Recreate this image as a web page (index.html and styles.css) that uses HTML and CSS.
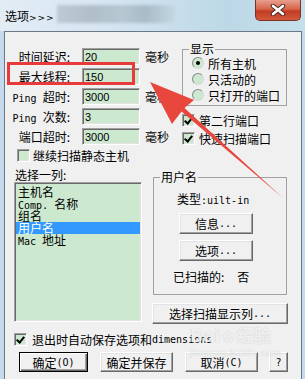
FILE: index.html
```html
<!DOCTYPE html>
<html lang="zh-CN">
<head>
<meta charset="UTF-8">
<title>选项</title>
<link rel="stylesheet" href="styles.css">
</head>
<body>
<div class="window">
    <div class="titlebar">
        <span class="title">选项<span class="arrows">&gt;&gt;&gt;</span></span>
        <span class="blur"></span>
        <span class="close">
            <svg width="20" height="12" viewBox="0 0 20 12">
                <path d="M5 2 L15 10 M15 2 L5 10" stroke="#4a2a24" stroke-width="4.5" stroke-linecap="round"/>
                <path d="M5 2 L15 10 M15 2 L5 10" stroke="#fff" stroke-width="2.6" stroke-linecap="round"/>
            </svg>
        </span>
    </div>

    <div class="client">
        <div class="top">
            <div class="fields">
                <label class="lbl">时间延迟:</label><input class="edit" type="text" value="20"><span class="unit">毫秒</span>
                <label class="lbl">最大线程:</label><input class="edit" type="text" value="150"><span class="unit"></span>
                <label class="lbl"><span class="m">Ping </span>超时:</label><input class="edit" type="text" value="3000"><span class="unit">毫秒</span>
                <label class="lbl"><span class="m">Ping </span>次数:</label><input class="edit" type="text" value="3"><span class="unit"></span>
                <label class="lbl">端口超时:</label><input class="edit" type="text" value="3000"><span class="unit">毫秒</span>
            </div>
            <div class="side">
                <fieldset class="group show">
                    <legend>显示</legend>
                    <div class="radio-row"><span class="radio on"></span>所有主机</div>
                    <div class="radio-row"><span class="radio"></span>只活动的</div>
                    <div class="radio-row"><span class="radio"></span>只打开的端口</div>
                </fieldset>
                <div class="check-row"><span class="box on"></span>第二行端口</div>
                <div class="check-row"><span class="box on"></span>快速扫描端口</div>
            </div>
        </div>

        <div class="check-row static"><span class="box"></span>继续扫描静态主机</div>

        <div class="middle">
            <div class="list-col">
                <div class="list-label">选择一列:</div>
                <div class="listbox">
                    <div class="item">主机名</div>
                    <div class="item"><span class="m">Comp. </span>名称</div>
                    <div class="item">组名</div>
                    <div class="item selected">用户名</div>
                    <div class="item"><span class="m">Mac </span>地址</div>
                </div>
            </div>
            <div class="user-col">
                <fieldset class="group user">
                    <legend>用户名</legend>
                    <div class="type-row">类型<span class="m">:uilt-in</span></div>
                    <button class="btn small">信息<span class="m">...</span></button>
                    <button class="btn small">选项<span class="m">...</span></button>
                    <div class="scan-row">已扫描的:<span class="no">否</span></div>
                </fieldset>
                <button class="btn wide">选择扫描显示列<span class="m">...</span></button>
            </div>
        </div>

        <div class="check-row save"><span class="box on"></span>退出时自动保存选项和<span class="m">dimensions</span></div>

        <div class="buttons">
            <button class="btn default">确定<span class="m">(O)</span></button>
            <button class="btn">确定并保存</button>
            <button class="btn">取消<span class="m">(C)</span></button>
            <button class="btn help"><span class="m">?</span></button>
        </div>
    </div>

    <div class="watermark">Bai<span class="paw">&#10047;</span>经验<div class="wm-url">jingyan.baidu.com</div></div>

    <svg class="marks" width="305" height="379" viewBox="0 0 305 379">
        <rect x="8.5" y="63.5" width="125" height="20" fill="none" stroke="#e8393b" stroke-width="3"/>
        <polygon points="150,82 194,100 184.5,108 283,198 181.5,111.5 172,124" fill="#e8473d"/>
    </svg>
</div>
</body>
</html>
```

FILE: styles.css
```css
* {
    box-sizing: border-box;
}
body {
    margin: 0;
    font-family: "Noto Sans CJK SC", sans-serif;
    font-size: 12px;
    color: #000;
}
.m {
    font-family: "DejaVu Sans Mono", monospace;
    font-size: 10px;
}
.window {
    position: relative;
    width: 305px;
    height: 379px;
    overflow: hidden;
    background: #c4d9ec;
    padding: 0 3px 0 4px;
}
.titlebar {
    display: flex;
    align-items: flex-start;
    height: 31px;
    margin: 0 -3px 0 -4px;
    padding-left: 5px;
    background: linear-gradient(90deg, #e2ecf5 0%, #d6e5f1 35%, #bcd8e7 75%, #c6dfec 100%);
}
.title {
    margin-top: 8px;
    line-height: 15px;
    font-size: 12px;
}
.arrows {
    font-family: "DejaVu Sans", sans-serif;
    font-size: 9px;
    letter-spacing: 1px;
}
.blur {
    width: 118px;
    height: 18px;
    margin: 5px 0 0 2px;
    background: linear-gradient(90deg, #b9c6cf 0%, #a9b8c2 30%, #b2c3cd 55%, #a3b5c1 75%, #c3d7e2 100%);
    filter: blur(1.5px);
    opacity: 0.85;
}
.close {
    display: flex;
    align-items: center;
    justify-content: center;
    width: 46px;
    height: 21px;
    margin-left: auto;
    margin-right: 4px;
    border: 1px solid #7b3224;
    border-top: none;
    border-radius: 0 0 5px 5px;
    background: linear-gradient(#e8a08e 0%, #d7654b 45%, #c23c22 55%, #d2583c 100%);
}
.client {
    height: 348px;
    border: 1px solid #6b7987;
    border-bottom: none;
    background: #f0f0f0;
}

/* top block */
.top {
    display: flex;
    padding-top: 11px;
}
.fields {
    display: grid;
    grid-template-columns: 77px 58px 29px;
    grid-auto-rows: 17px;
    row-gap: 3px;
    margin-top: 5px;
}
.lbl {
    padding-right: 12px;
    text-align: right;
    line-height: 17px;
    white-space: nowrap;
}
.edit {
    width: 58px;
    height: 17px;
    margin: 0;
    padding: 0 0 0 2px;
    border: 1px solid;
    border-color: #a0a0a0 #fff #fff #a0a0a0;
    box-shadow: inset 1px 1px 0 #696969, inset -1px -1px 0 #e3e3e3;
    background: #cce8cf;
    font-family: "Liberation Sans", sans-serif;
    font-size: 11px;
    color: #000;
    outline: none;
}
.unit {
    padding-left: 5px;
    line-height: 17px;
}
.side {
    margin-left: 13px;
}
.group {
    margin: 0;
    border: 1px solid #a0a0a0;
    padding: 0 0 0 6px;
}
.group legend {
    padding: 0 1px;
    line-height: 12px;
}
.show {
    width: 105px;
    padding-bottom: 2px;
}
.radio-row {
    display: flex;
    align-items: center;
    height: 16px;
    margin-left: 3px;
}
.radio {
    position: relative;
    width: 12px;
    height: 12px;
    margin-right: 4px;
    border: 1px solid;
    border-color: #8a8a8a #d8d8d8 #d8d8d8 #8a8a8a;
    border-radius: 50%;
    background: #cce8cf;
}
.radio.on::after {
    content: "";
    position: absolute;
    left: 3px;
    top: 3px;
    width: 4px;
    height: 4px;
    border-radius: 50%;
    background: #000;
}
.check-row {
    display: flex;
    align-items: center;
    height: 18px;
    white-space: nowrap;
}
.side .check-row:first-of-type {
    margin-top: 5px;
}
.box {
    position: relative;
    width: 13px;
    height: 13px;
    margin-right: 4px;
    border: 1px solid;
    border-color: #a0a0a0 #fff #fff #a0a0a0;
    box-shadow: inset 1px 1px 0 #696969, inset -1px -1px 0 #e3e3e3;
    background: #cce8cf;
}
.box.on::after {
    content: "";
    position: absolute;
    left: 3px;
    top: 1px;
    width: 3px;
    height: 6px;
    border: solid #000;
    border-width: 0 2px 2px 0;
    transform: rotate(40deg);
}
.static {
    height: 16px;
    margin-left: 12px;
}
.static .box {
    margin-right: 3px;
}

/* list + user group */
.middle {
    display: flex;
}
.list-col {
    margin-left: 9px;
}
.list-label {
    margin-top: 6px;
    padding-left: 1px;
    line-height: 12px;
}
.listbox {
    width: 128px;
    height: 140px;
    margin-top: 1px;
    padding: 3px 1px;
    border: 1px solid;
    border-color: #a0a0a0 #fff #fff #a0a0a0;
    box-shadow: inset 1px 1px 0 #696969, inset -1px -1px 0 #e3e3e3;
    background: #cce8cf;
}
.item {
    height: 12px;
    padding-left: 2px;
    line-height: 12px;
    white-space: nowrap;
}
.item.selected {
    background: #3399ff;
    color: #fff;
}
.user-col {
    margin-left: 11px;
}
.user {
    width: 134px;
    margin-top: 8px;
    padding-bottom: 11px;
}
.type-row {
    margin: 10px 0 0 17px;
    line-height: 12px;
}
.btn {
    display: flex;
    align-items: center;
    justify-content: center;
    height: 21px;
    margin: 0;
    padding: 0;
    border: 1px solid;
    border-color: #fff #696969 #696969 #fff;
    box-shadow: inset -1px -1px 0 #a0a0a0, inset 1px 1px 0 #e3e3e3;
    background: #f0f0f0;
    font-family: "Noto Sans CJK SC", sans-serif;
    font-size: 12px;
    color: #000;
    white-space: nowrap;
}
.small {
    width: 74px;
    margin: 6px 0 0 19px;
}
.scan-row {
    margin: 10px 0 0 13px;
    line-height: 12px;
    white-space: nowrap;
}
.no {
    margin-left: 13px;
}
.wide {
    width: 136px;
    margin: 8px 0 0 -1px;
}
.save {
    height: 16px;
    margin: 7px 0 0 9px;
}
.save .box {
    margin-right: 5px;
}
.buttons {
    display: flex;
    margin-top: 5px;
    padding-left: 14px;
}
.buttons .btn {
    width: 73px;
    height: 20px;
    margin-right: 12px;
}
.buttons .default {
    width: 69px;
    border-color: #000;
    box-shadow: inset 1px 1px 0 #fff, inset -1px -1px 0 #696969, inset -2px -2px 0 #a0a0a0;
}
.buttons .help {
    width: 19px;
    margin-left: -1px;
}

/* overlays */
.watermark {
    position: absolute;
    left: 190px;
    top: 326px;
    font-family: "DejaVu Sans", sans-serif;
    font-size: 17px;
    font-weight: bold;
    line-height: 20px;
    color: rgba(255, 255, 255, 0.75);
    text-shadow: 0 0 1px rgba(140, 140, 140, 0.5);
}
.paw {
    font-size: 15px;
    margin: 0 2px;
}
.wm-url {
    font-size: 9px;
    font-weight: normal;
    line-height: 12px;
    letter-spacing: 0.5px;
}
.marks {
    position: absolute;
    left: 0;
    top: 0;
    pointer-events: none;
}
```
